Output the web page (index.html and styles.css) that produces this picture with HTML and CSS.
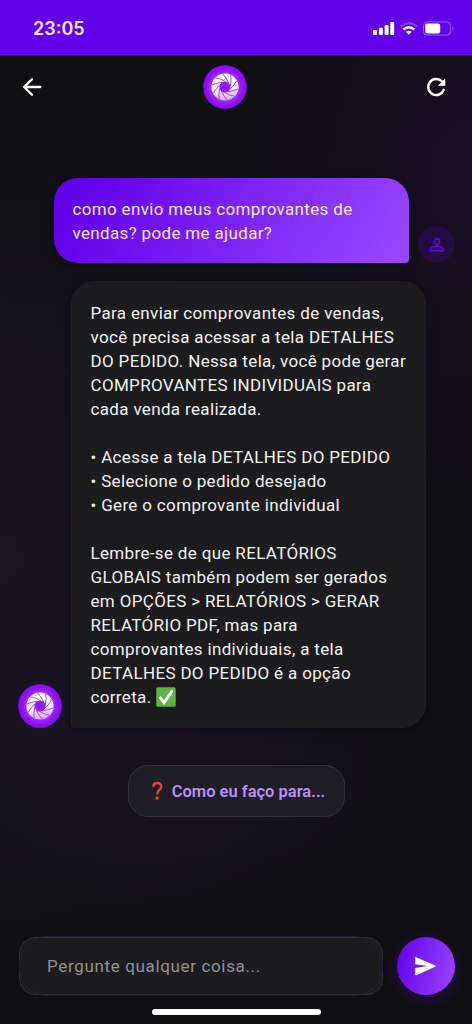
FILE: index.html
```html
<!DOCTYPE html>
<html lang="pt-BR">
<head>
<meta charset="utf-8">
<title>Chat</title>
<link rel="stylesheet" href="styles.css">
</head>
<body>
<svg class="defs" width="0" height="0" aria-hidden="true">
  <defs>
    <linearGradient id="ring" gradientUnits="userSpaceOnUse" x1="-3" y1="-13" x2="3" y2="14">
      <stop offset="0" stop-color="#fff"/><stop offset=".6" stop-color="#f8e4ff"/><stop offset="1" stop-color="#dda2fb"/>
    </linearGradient>
    <radialGradient id="orb">
      <stop offset="0" stop-color="#8a12f0"/><stop offset=".6" stop-color="#a030fa"/><stop offset=".82" stop-color="#9410f8"/><stop offset="1" stop-color="#8a08f2"/>
    </radialGradient>
    <symbol id="logo" viewBox="-22 -22 44 44">
      <circle r="21.8" fill="url(#orb)"/>
      <circle r="9.6" fill="none" stroke="url(#ring)" stroke-width="8"/>
      <g stroke="#7a1fc4" stroke-width=".7" fill="none">
        <path id="blade" d="M.5-5.5Q-4.5-8.4-9.6-9.2"/>
        <use href="#blade" transform="rotate(36)"/><use href="#blade" transform="rotate(72)"/>
        <use href="#blade" transform="rotate(108)"/><use href="#blade" transform="rotate(144)"/>
        <use href="#blade" transform="rotate(180)"/><use href="#blade" transform="rotate(216)"/>
        <use href="#blade" transform="rotate(252)"/><use href="#blade" transform="rotate(288)"/>
        <use href="#blade" transform="rotate(324)"/>
      </g>
    </symbol>
  </defs>
</svg>
<div class="phone">
  <div class="status">
    <span class="time">23:05</span>
    <svg class="indicators" width="82" height="16" viewBox="0 0 82 16">
      <g fill="#fff">
        <rect x="0" y="9" width="4" height="5" rx="1"/><rect x="5.9" y="6.7" width="4" height="7.3" rx="1"/>
        <rect x="11.6" y="4" width="4" height="10" rx="1"/><rect x="17.2" y="1" width="4" height="13" rx="1"/>
        <path d="M32.9 10.8q2.9-2.2 5.8 0l-2.9 3z"/>
        <rect x="52.2" y="2.6" width="15" height="9.8" rx="2"/>
      </g>
      <path d="M30.3 8.5q5.5-4.6 11 0" fill="none" stroke="#fff" stroke-width="2.3"/>
      <path d="M27.5 5.4q8.3-6.6 16.6 0" fill="none" stroke="#8440f3" stroke-width="2.2"/>
      <rect x="50.5" y=".9" width="27" height="13.2" rx="3.8" fill="none" stroke="#9a61f8"/>
      <path d="M79.3 5.3q2.4 2.2 0 4.4z" fill="#9a61f8"/>
    </svg>
  </div>
  <header class="bar">
    <svg class="icon" viewBox="0 0 24 24"><path fill="none" stroke="#fff" stroke-width="2.3" stroke-linecap="round" d="M20.3 12H4.6M12 4.2 4.2 12l7.8 7.8"/></svg>
    <svg class="logo"><use href="#logo"/></svg>
    <svg class="icon" viewBox="0 0 24 24"><path fill="none" stroke="#fff" stroke-width="2.5" stroke-linecap="round" d="M19.8 14.8A8 8 0 1 1 17.9 6.3"/><path fill="#fff" d="M21 4v6.5h-6.5z" stroke="#fff" stroke-width=".6"/></svg>
  </header>
  <main class="chat">
    <div class="row user">
      <div class="bubble outgoing">como envio meus comprovantes de<br>vendas? pode me ajudar?</div>
      <div class="avatar"><svg width="18" height="18" viewBox="0 0 24 24" fill="none" stroke="#6206d8" stroke-width="2"><circle cx="12" cy="7.3" r="3.6"/><path d="M3.3 19.7v-2c0-5.2 17.4-5.2 17.4 0v2z"/></svg></div>
    </div>
    <div class="row bot">
      <svg class="logo"><use href="#logo"/></svg>
      <div class="bubble incoming">
        <p>Para enviar comprovantes de vendas,<br>você precisa acessar a tela DETALHES<br>DO PEDIDO. Nessa tela, você pode gerar<br>COMPROVANTES INDIVIDUAIS para<br>cada venda realizada.</p>
        <p>• Acesse a tela DETALHES DO PEDIDO<br>• Selecione o pedido desejado<br>• Gere o comprovante individual</p>
        <p>Lembre-se de que RELATÓRIOS<br>GLOBAIS também podem ser gerados<br>em OPÇÕES &gt; RELATÓRIOS &gt; GERAR<br>RELATÓRIO PDF, mas para<br>comprovantes individuais, a tela<br>DETALHES DO PEDIDO é a opção<br>correta. <svg class="check" viewBox="0 0 20 20" role="img" aria-label="✅"><rect x=".3" y=".3" width="19.4" height="19.4" rx="1.5" fill="#5db344"/><path d="m4.2 10.8 3.8 4.7L15.9 4.3" fill="none" stroke="#fff" stroke-width="3" stroke-linecap="round"/></svg></p>
      </div>
    </div>
    <button class="suggestion"><svg width="13" height="20" viewBox="0 0 13 20" role="img" aria-label="❓"><path d="M2.3 5.8C2.5 .9 10.3.9 10.2 5.6 10.1 9 6.3 9 6.1 13.2" fill="none" stroke="#e8403a" stroke-width="2.5"/><circle cx="6.1" cy="17" r="1.7" fill="#e8403a"/></svg><span>Como eu faço para...</span></button>
  </main>
  <footer class="composer">
    <div class="field">Pergunte qualquer coisa...</div>
    <button class="send"><svg width="28" height="28" viewBox="0 0 28 28"><path d="M4.2 4.8 24.6 13.7Q25.6 14.1 24.6 14.5L5.4 23.2Q4.2 23.5 4.2 22.5V16L17 14.1 4.2 12.2V5.8Q4.2 4.2 5.4 4.8z" fill="#fff"/></svg></button>
  </footer>
  <div class="home"></div>
</div>
</body>
</html>
```
FILE: styles.css
```css
* { box-sizing: border-box; }
body { margin: 0; font-family: Roboto, sans-serif; color: #f2f2f2; background: #101014; }
.defs { display: block; height: 0; }
button { font: inherit; border: 0; padding: 0; }
.phone {
  width: 472px; height: 1024px; display: flex; flex-direction: column; overflow: hidden;
  background:
    radial-gradient(ellipse 250px 350px at 100% 180px, rgba(58, 8, 110, .2), transparent),
    radial-gradient(ellipse 360px 430px at 0 560px, rgba(50, 32, 78, .3), transparent),
    radial-gradient(ellipse 230px 170px at 210px 760px, rgba(48, 25, 80, .2), transparent),
    #101012;
}
.status { height: 55px; flex: none; background: #6200ea; display: flex; align-items: center; justify-content: space-between; padding: 2px 17px 0 33px; }
.time { font: 600 18px Inter, sans-serif; color: #f4e8ff; }
.indicators { display: block; }
.bar { height: 64px; flex: none; display: grid; grid-template-columns: 183px 1fr 24px; align-items: center; padding: 0 24px 0 20px; }
.icon { width: 24px; height: 24px; display: block; }
.logo { width: 44px; height: 44px; flex: none; display: block; }
.chat { flex: 1; display: flex; flex-direction: column; padding: 59px 17px 0 18px; }
.row { display: flex; align-items: flex-end; }
.user { justify-content: flex-end; gap: 9px; }
.bubble { font-size: 17px; line-height: 24px; letter-spacing: .34px; white-space: nowrap; }
.outgoing { width: 355px; height: 85px; padding: 19px 18.5px; border-radius: 24px 24px 4px 24px; color: #f4e8ff; background: linear-gradient(120deg, #6200ea 8%, #7c22f4 50%, #9945ff 95%); box-shadow: 0 4px 12px rgba(0, 0, 0, .35); }
.avatar { width: 37px; height: 37px; border-radius: 50%; background: #240b43; display: flex; align-items: center; justify-content: center; }
.bot { margin-top: 18px; gap: 9px; }
.incoming { width: 355px; height: 447px; padding: 19px 18.5px; border-radius: 24px 24px 24px 4px; background: #1c1c1e; border: 1px solid #201c2b; box-shadow: 0 4px 12px rgba(0, 0, 0, .35); }
.incoming p { margin: 0 0 24px; }
.check { width: 20px; height: 20px; vertical-align: -4px; }
.suggestion { align-self: center; width: 217px; height: 52px; margin: 37px 1px 0 0; border: 1px solid #343239; border-radius: 20px; background: #201e25; color: #b690f5; display: flex; align-items: center; justify-content: center; gap: 8px; padding-left: 4px; font-size: 16.5px; font-weight: 600; white-space: nowrap; }
.composer { flex: none; display: flex; align-items: center; gap: 14px; padding: 0 17px 0 19px; height: 60px; }
.field { position: relative; z-index: 0; width: 364px; height: 58px; border: 1px solid #302e37; border-radius: 16px; background: #1c1c1e; color: #929297; font-size: 17px; letter-spacing: .65px; line-height: 56px; padding-left: 27px; white-space: nowrap; }
.field::before { content: ""; position: absolute; z-index: -1; inset: -2px -1px; border: 1px solid #242033; border-radius: 28px; }
.send { width: 58px; height: 58px; border-radius: 50%; background: linear-gradient(100deg, #6200ea, #9945ff); display: flex; align-items: center; justify-content: center; box-shadow: 0 4px 14px rgba(98, 0, 234, .28); }
.send svg { margin-left: -2px; }
.home { flex: none; width: 169px; height: 6px; border-radius: 3px; background: #fff; margin: 13px 0 9px 152px; }
```
